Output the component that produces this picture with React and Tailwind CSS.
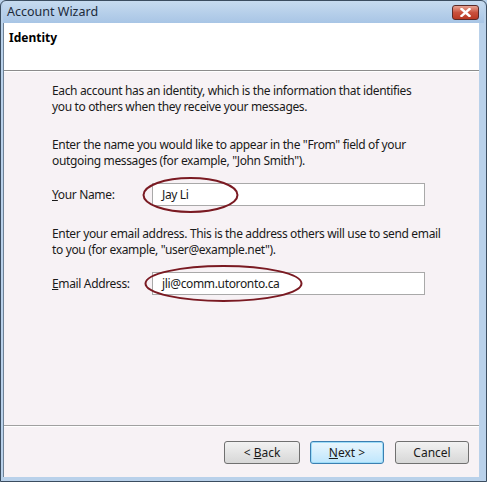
export default function App() {
  const font = { fontFamily: '"Noto Sans", "Open Sans", sans-serif' };
  return (
    <div className="w-[487px] h-[482px] relative overflow-hidden bg-[#b9d1ea]" style={font}>
      <div className="absolute inset-0 border border-[#3b4d60] rounded-t-[6px] pointer-events-none z-20"></div>
      <div className="flex flex-col h-full pl-[3px] pr-[8px] pb-[5px]">
        {/* title bar */}
        <div className="h-[23px] flex items-center justify-between bg-gradient-to-b from-[#c8dcf0] to-[#a8c5e5] -mr-[5px] pr-[5px]">
          <span className="text-[12.5px] text-[#1c2a3a] pl-[4px] leading-none mt-[1px]">Account Wizard</span>
          <div className="w-[27px] h-[15px] mt-[2px] rounded-[3px] border border-[#5a2a28] bg-gradient-to-b from-[#e7a394] via-[#c9513d] to-[#b93822] flex items-center justify-center">
            <svg width="11" height="9" viewBox="0 0 11 9">
              <path d="M1.5 1 L9.5 8 M9.5 1 L1.5 8" stroke="#ffffff" strokeWidth="2.4" strokeLinecap="square" />
            </svg>
          </div>
        </div>
        <div className="flex-1 flex flex-col bg-[#f7f2f5] border-l border-[#6f8296]">
          {/* header */}
          <div className="h-[48px] bg-white border-b border-[#8c8c8c] pl-[5px] pt-[6px]">
            <div className="text-[12px] font-bold text-black">Identity</div>
          </div>
          <div className="border-t border-white"></div>
          {/* content */}
          <div className="flex-1 relative pl-[48px] pr-[20px] pt-[11px] text-[12px] leading-[16px] text-[#1a1a1a] tracking-[-0.35px] whitespace-nowrap">
            <p>Each account has an identity, which is the information that identifies<br />you to others when they receive your messages.</p>
            <p className="mt-[22px]">Enter the name you would like to appear in the "From" field of your<br />outgoing messages (for example, "John Smith").</p>
            <div className="flex items-center mt-[14px]">
              <span className="w-[100px]"><span className="underline">Y</span>our Name:</span>
              <div className="w-[273px] h-[23px] bg-white border border-[#a9a9a9] flex items-center pl-[9px]">Jay Li</div>
            </div>
            <p className="mt-[20px]">Enter your email address. This is the address others will use to send email<br />to you (for example, "user@example.net").</p>
            <div className="flex items-center mt-[14px]">
              <span className="w-[100px]"><span className="underline">E</span>mail Address:</span>
              <div className="w-[273px] h-[23px] bg-white border border-[#a9a9a9] flex items-center pl-[9px]">jli@comm.utoronto.ca</div>
            </div>
          </div>
          {/* footer */}
          <div className="border-t border-[#a0a0a0]"></div>
          <div className="border-t border-white"></div>
          <div className="h-[50px] flex items-start justify-end gap-[10px] pr-[10px] pt-[14px] text-[12px]">
            <button className="w-[76px] h-[23px] rounded-[3px] border border-[#707070] bg-gradient-to-b from-[#f2f2f2] to-[#d7d7d7] text-[#1a1a1a]">&lt; <span className="underline">B</span>ack</button>
            <button className="w-[74px] h-[23px] rounded-[3px] border border-[#3c7fb1] bg-gradient-to-b from-[#eaf6fd] to-[#bee6fd] text-[#1a1a1a] shadow-[inset_0_0_0_1px_#9edcf8]"><span className="underline">N</span>ext &gt;</button>
            <button className="w-[74px] h-[23px] rounded-[3px] border border-[#707070] bg-gradient-to-b from-[#f2f2f2] to-[#d7d7d7] text-[#1a1a1a] ml-[1px]">Cancel</button>
          </div>
        </div>
      </div>
      {/* ellipses */}
      <svg className="absolute left-0 top-0 pointer-events-none" width="487" height="482">
        <ellipse cx="190.5" cy="195" rx="47" ry="17" fill="none" stroke="#7a1a22" strokeWidth="2" />
        <ellipse cx="223.5" cy="283.5" rx="78" ry="17.5" fill="none" stroke="#7a1a22" strokeWidth="2" />
      </svg>
    </div>
  );
}
